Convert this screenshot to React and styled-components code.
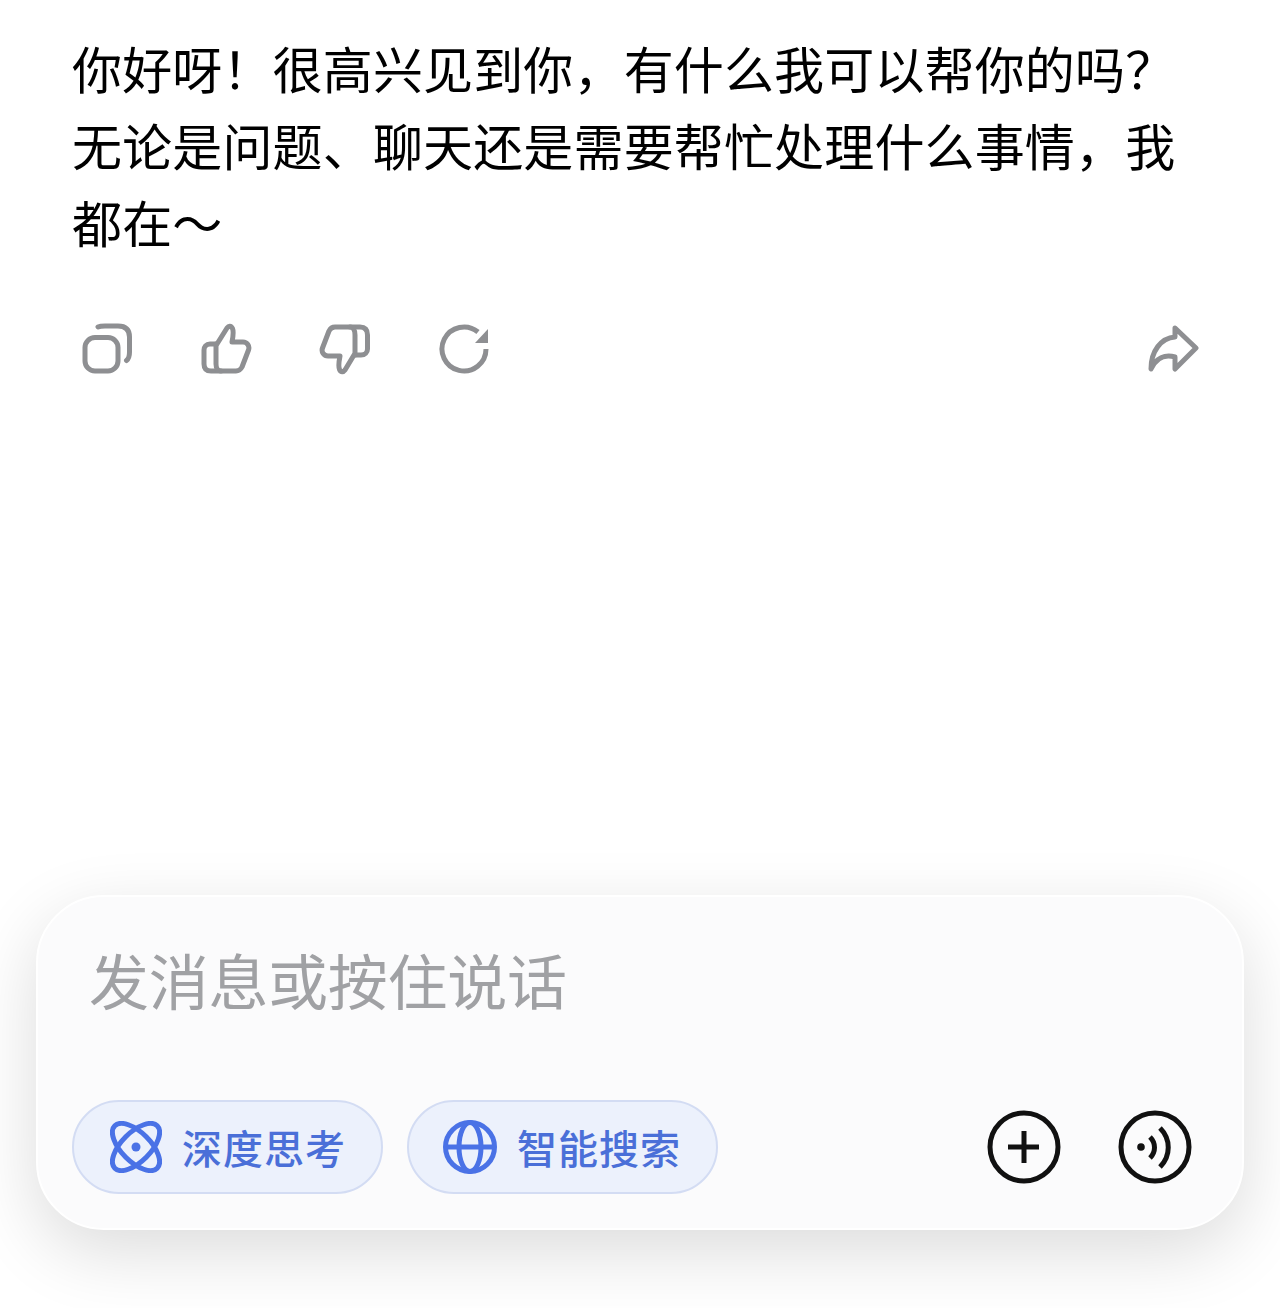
import React from "react";
import styled, { createGlobalStyle } from "styled-components";

const GlobalStyle = createGlobalStyle`
    html, body {
        margin: 0;
        padding: 0;
        background: #fff;
    }
`

const Page = styled.div`
    width: 1280px;
    height: 1308px;
    display: flex;
    flex-direction: column;
    background: #fff;
    font-family: "Noto Sans CJK SC", "Noto Sans", sans-serif;
    overflow: hidden;
`

const Message = styled.p`
    margin: 29px 0 0 72px;
    width: 1110px;
    font-size: 50px;
    line-height: 77px;
    letter-spacing: 0.15px;
    color: #000;
`

const Actions = styled.div`
    display: flex;
    align-items: center;
    margin-top: 54px;
    padding: 0 72px 0 72px;
`

const ActionButton = styled.div`
    width: 70px;
    height: 70px;
    margin-right: 49px;
    margin-left: ${props => props.$push ? 'auto' : '0'};
    display: flex;
    align-items: center;
    justify-content: center;
    &:last-child {
        margin-right: 0;
    }
`

const Composer = styled.div`
    margin: auto 36px 78px 36px;
    height: 335px;
    box-sizing: border-box;
    padding: 46px 34px 34px 34px;
    display: flex;
    flex-direction: column;
    background: #fbfbfc;
    border: 2px solid #fff;
    border-radius: 68px;
    box-shadow: 0 22px 70px rgba(0, 0, 0, 0.14);
`

const Placeholder = styled.div`
    font-size: 60px;
    line-height: 72px;
    margin-left: 17px;
    letter-spacing: -0.3px;
    color: #a0a1a4;
`

const Tools = styled.div`
    display: flex;
    align-items: center;
    margin-top: auto;
`

const Pill = styled.div`
    width: 311px;
    height: 94px;
    box-sizing: border-box;
    margin-right: 24px;
    padding-left: ${props => props.$pad}px;
    display: flex;
    align-items: center;
    gap: ${props => props.$gap}px;
    background: #ecf1fc;
    border: 2px solid #d3dcf3;
    border-radius: 47px;
    color: #4a6fd8;
    font-size: 40px;
    font-weight: 500;
    letter-spacing: 1px;
`

const RoundIcons = styled.div`
    margin-left: auto;
    margin-right: 16px;
    display: flex;
    align-items: center;
    gap: 57px;
`

const grey = '#8e8f92'

const CopyIcon = () => (
    <svg width="52" height="52" viewBox="0 0 52 52" fill="none" stroke={grey} strokeWidth="5" strokeLinecap="round" strokeLinejoin="round">
        <rect x="4" y="14.5" width="33" height="33.5" rx="10" />
        <path d="M17 4 C19 3 21 3 24 3 H37 C45 3 48.5 7 48.5 14 V29 C48.5 33 47.5 36 45.5 37.5" />
    </svg>
)

const ThumbUpIcon = () => (
    <svg width="52" height="52" viewBox="0 0 52 52" fill="none" stroke={grey} strokeWidth="5" strokeLinecap="round" strokeLinejoin="round">
        <path d="M17 21 H10 C6 21 4 24 4 27 V41 C4 45 6 48 11 48 H36 C39 48 41 46 42 44 L48.5 27 C50 23 47 19 43 19 H32 C33 14 34 9 32.5 5.5 C31 2 28.5 3 27 5 Z" />
        <path d="M16 21 V41 C16 45 18 48 21 48" />
    </svg>
)

const ThumbDownIcon = () => (
    <svg width="52" height="52" viewBox="0 0 52 52" fill="none" stroke={grey} strokeWidth="5" strokeLinecap="round" strokeLinejoin="round">
        <path d="M35 32 H42 C46 32 48.5 29 48.5 26 V12 C48.5 7 46 4 41 4 H16 C13 4 11 6 10 8 L3.5 25 C2 29 5 33 9 33 H21 C20 38 19 43 20.5 46.5 C22 50 24.5 49 26 47 Z" />
        <path d="M36 32 V12 C36 7 34 4 31 4" />
    </svg>
)

const RefreshIcon = () => (
    <svg width="52" height="52" viewBox="0 0 52 52" fill="none">
        <path d="M48 26 A22 22 0 1 1 40 9" stroke={grey} strokeWidth="5" strokeLinecap="butt" />
        <path d="M50 6 V20 H37 Z" fill={grey} />
    </svg>
)

const ShareIcon = () => (
    <svg width="52" height="52" viewBox="0 0 52 52" fill="none" stroke={grey} strokeWidth="5" strokeLinecap="round" strokeLinejoin="round">
        <path d="M28 5 L49 25 L28 46 V34 C18 31 9 35 4 46 C4 28 14 15 28 14 Z" />
    </svg>
)

const AtomIcon = () => (
    <svg width="52" height="52" viewBox="0 0 52 52" fill="none" stroke="#4a72e6" strokeWidth="5">
        <ellipse cx="26" cy="26" rx="30" ry="14.5" transform="rotate(45 26 26)" />
        <ellipse cx="26" cy="26" rx="30" ry="14.5" transform="rotate(-45 26 26)" />
        <circle cx="26" cy="26" r="4.5" fill="#4a72e6" stroke="none" />
    </svg>
)

const GlobeIcon = () => (
    <svg width="54" height="54" viewBox="0 0 54 54" fill="none" stroke="#4a72e6" strokeWidth="5">
        <circle cx="27" cy="27" r="24.5" />
        <ellipse cx="27" cy="27" rx="11" ry="24.5" />
        <path d="M3 27 H51" />
    </svg>
)

const PlusIcon = () => (
    <svg width="74" height="74" viewBox="0 0 74 74" fill="none" stroke="#111" strokeWidth="5">
        <circle cx="37" cy="37" r="34" />
        <path d="M21 37 H52 M37 21 V53" />
    </svg>
)

const VoiceIcon = () => (
    <svg width="74" height="74" viewBox="0 0 74 74" fill="none" stroke="#111" strokeWidth="5">
        <circle cx="37" cy="37" r="34" />
        <circle cx="23" cy="37" r="3.8" fill="#111" stroke="none" />
        <path d="M32 27 C38 33 38 42 32 48" />
        <path d="M42 18 C53 29 53 46 42 57" />
    </svg>
)

const App = () => {
    return(
        <>
        <GlobalStyle />
        <Page>
            <Message>你好呀！很高兴见到你，有什么我可以帮你的吗？无论是问题、聊天还是需要帮忙处理什么事情，我都在～</Message>

            <Actions>
                <ActionButton><CopyIcon /></ActionButton>
                <ActionButton><ThumbUpIcon /></ActionButton>
                <ActionButton><ThumbDownIcon /></ActionButton>
                <ActionButton><RefreshIcon /></ActionButton>
                <ActionButton $push><ShareIcon /></ActionButton>
            </Actions>

            <Composer>
                <Placeholder>发消息或按住说话</Placeholder>
                <Tools>
                    <Pill $pad={36} $gap={20}><AtomIcon />深度思考</Pill>
                    <Pill $pad={34} $gap={20}><GlobeIcon />智能搜索</Pill>
                    <RoundIcons>
                        <PlusIcon />
                        <VoiceIcon />
                    </RoundIcons>
                </Tools>
            </Composer>
        </Page>
        </>
    )
}

export default App
